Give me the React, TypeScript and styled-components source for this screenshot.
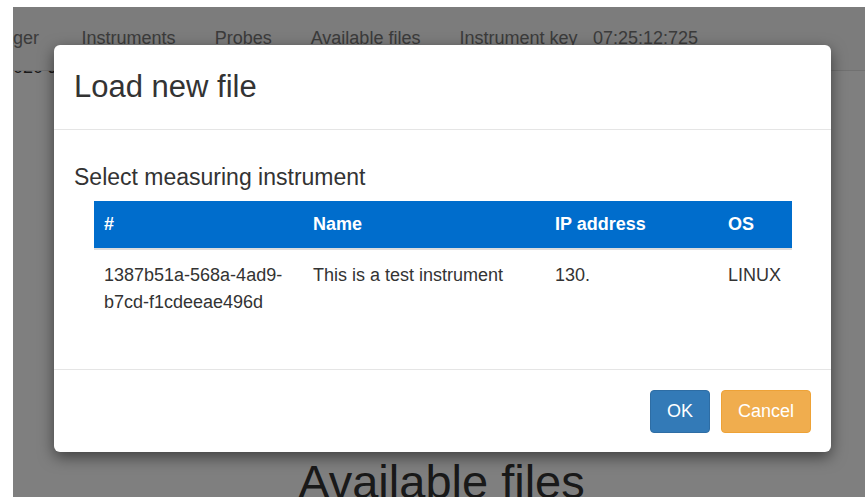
import styled, { createGlobalStyle } from 'styled-components';

interface Instrument {
  id: string;
  name: string;
  ip: string;
  os: string;
}

const instruments: Instrument[] = [
  {
    id: '1387b51a-568a-4ad9-b7cd-f1cdeeae496d',
    name: 'This is a test instrument',
    ip: '130.',
    os: 'LINUX',
  },
];

const navLinks = ['Instruments', 'Probes', 'Available files', 'Instrument key'];

const App = () => {
  return (
    <>
      <GlobalStyle />
      <SScreen>
        <SNavbar>
          <SBrand>Data Manager</SBrand>
          {navLinks.map((link) => (
            <SNavLink key={link}>{link}</SNavLink>
          ))}
          <SClock>07:25:12:725</SClock>
        </SNavbar>
        <SContent>
          <SDateLine>2020 Jan</SDateLine>
          <SPageTitle>Available files</SPageTitle>
        </SContent>

        <SBackdrop>
          <SModal>
            <SModalHeader>Load new file</SModalHeader>
            <SModalBody>
              <SSubtitle>Select measuring instrument</SSubtitle>
              <STable>
                <colgroup>
                  <col style={{ width: 209 }} />
                  <col style={{ width: 242 }} />
                  <col style={{ width: 173 }} />
                  <col />
                </colgroup>
                <thead>
                  <tr>
                    <STh>#</STh>
                    <STh>Name</STh>
                    <STh>IP address</STh>
                    <STh>OS</STh>
                  </tr>
                </thead>
                <tbody>
                  {instruments.map((item) => (
                    <tr key={item.id}>
                      <STd>{item.id}</STd>
                      <STd>{item.name}</STd>
                      <STd>{item.ip}</STd>
                      <STd>{item.os}</STd>
                    </tr>
                  ))}
                </tbody>
              </STable>
            </SModalBody>
            <SModalFooter>
              <SButton $variant="primary">OK</SButton>
              <SButton $variant="warning">Cancel</SButton>
            </SModalFooter>
          </SModal>
        </SBackdrop>
      </SScreen>
    </>
  );
};

export default App;

const GlobalStyle = createGlobalStyle`
  * {
    box-sizing: border-box;
  }

  body {
    margin: 0;
    background: #fff;
    color: #333;
    font-family: 'Liberation Sans', Arial, Helvetica, sans-serif;
    font-size: 18px;
  }
`;

const SScreen = styled.div`
  position: relative;
  overflow: hidden;
  height: 490px;
  margin: 7px 0 0 13px;
  background: #fff;
`;

const SNavbar = styled.nav`
  position: relative;
  z-index: 1;
  display: flex;
  height: 64px;
  line-height: 62px;
  background: #f8f8f8;
  border-bottom: 1px solid #e2e2e2;
  color: #777;
  font-size: 18px;
  white-space: nowrap;
`;

/* the brand is scrolled partly out of view */
const SBrand = styled.span`
  margin-left: -88px;
  padding-right: 23px;
`;

const SNavLink = styled.span`
  padding: 0 19.5px;
`;

const SClock = styled.span`
  margin-left: -4px;
`;

const SContent = styled.main`
  margin-top: -14px;
`;

const SDateLine = styled.div`
  margin-left: -10px;
  line-height: 20px;
  white-space: nowrap;
`;

const SPageTitle = styled.h1`
  margin: 379px 0 0;
  padding-left: 5px;
  font-size: 47px;
  font-weight: 400;
  line-height: 1.1;
  text-align: center;
`;

const SBackdrop = styled.div`
  position: absolute;
  inset: 0;
  z-index: 2;
  padding: 38px 0 0 41px;
  background-color: rgba(0, 0, 0, 0.5);
`;

const SModal = styled.div`
  width: 777px;
  background: #fff;
  border-radius: 6px;
  box-shadow: 0 5px 15px rgba(0, 0, 0, 0.5);
  overflow: hidden;
`;

const SModalHeader = styled.header`
  padding: 20px 20px;
  font-size: 31px;
  line-height: 44px;
  border-bottom: 1px solid #e5e5e5;
`;

const SModalBody = styled.div`
  padding: 20px;
`;

const SSubtitle = styled.h4`
  margin: 15px 0 11px;
  font-size: 23px;
  font-weight: 400;
  line-height: 25px;
`;

const STable = styled.table`
  width: 698px;
  margin: 0 20px 23px;
  border-collapse: collapse;
  table-layout: fixed;
`;

const STh = styled.th`
  padding: 10px;
  background: #006dcc;
  color: #fff;
  font-size: 18px;
  font-weight: 700;
  line-height: 27px;
  text-align: left;
  border-bottom: 2px solid #ddd;
`;

const STd = styled.td`
  padding: 12px 10px 10px;
  font-size: 18px;
  line-height: 27px;
  vertical-align: top;
  word-break: break-word;
`;

const SModalFooter = styled.footer`
  display: flex;
  justify-content: flex-end;
  gap: 11px;
  padding: 20px 20px 19px;
  border-top: 1px solid #e5e5e5;
`;

const SButton = styled.button<{ $variant: 'primary' | 'warning' }>`
  height: 43px;
  padding: 0 16px;
  border: 1px solid ${({ $variant }) => ($variant === 'primary' ? '#2e6da4' : '#eea236')};
  border-radius: 4px;
  background: ${({ $variant }) => ($variant === 'primary' ? '#337ab7' : '#f0ad4e')};
  color: #fff;
  font-family: inherit;
  font-size: 18px;
  cursor: pointer;
`;
